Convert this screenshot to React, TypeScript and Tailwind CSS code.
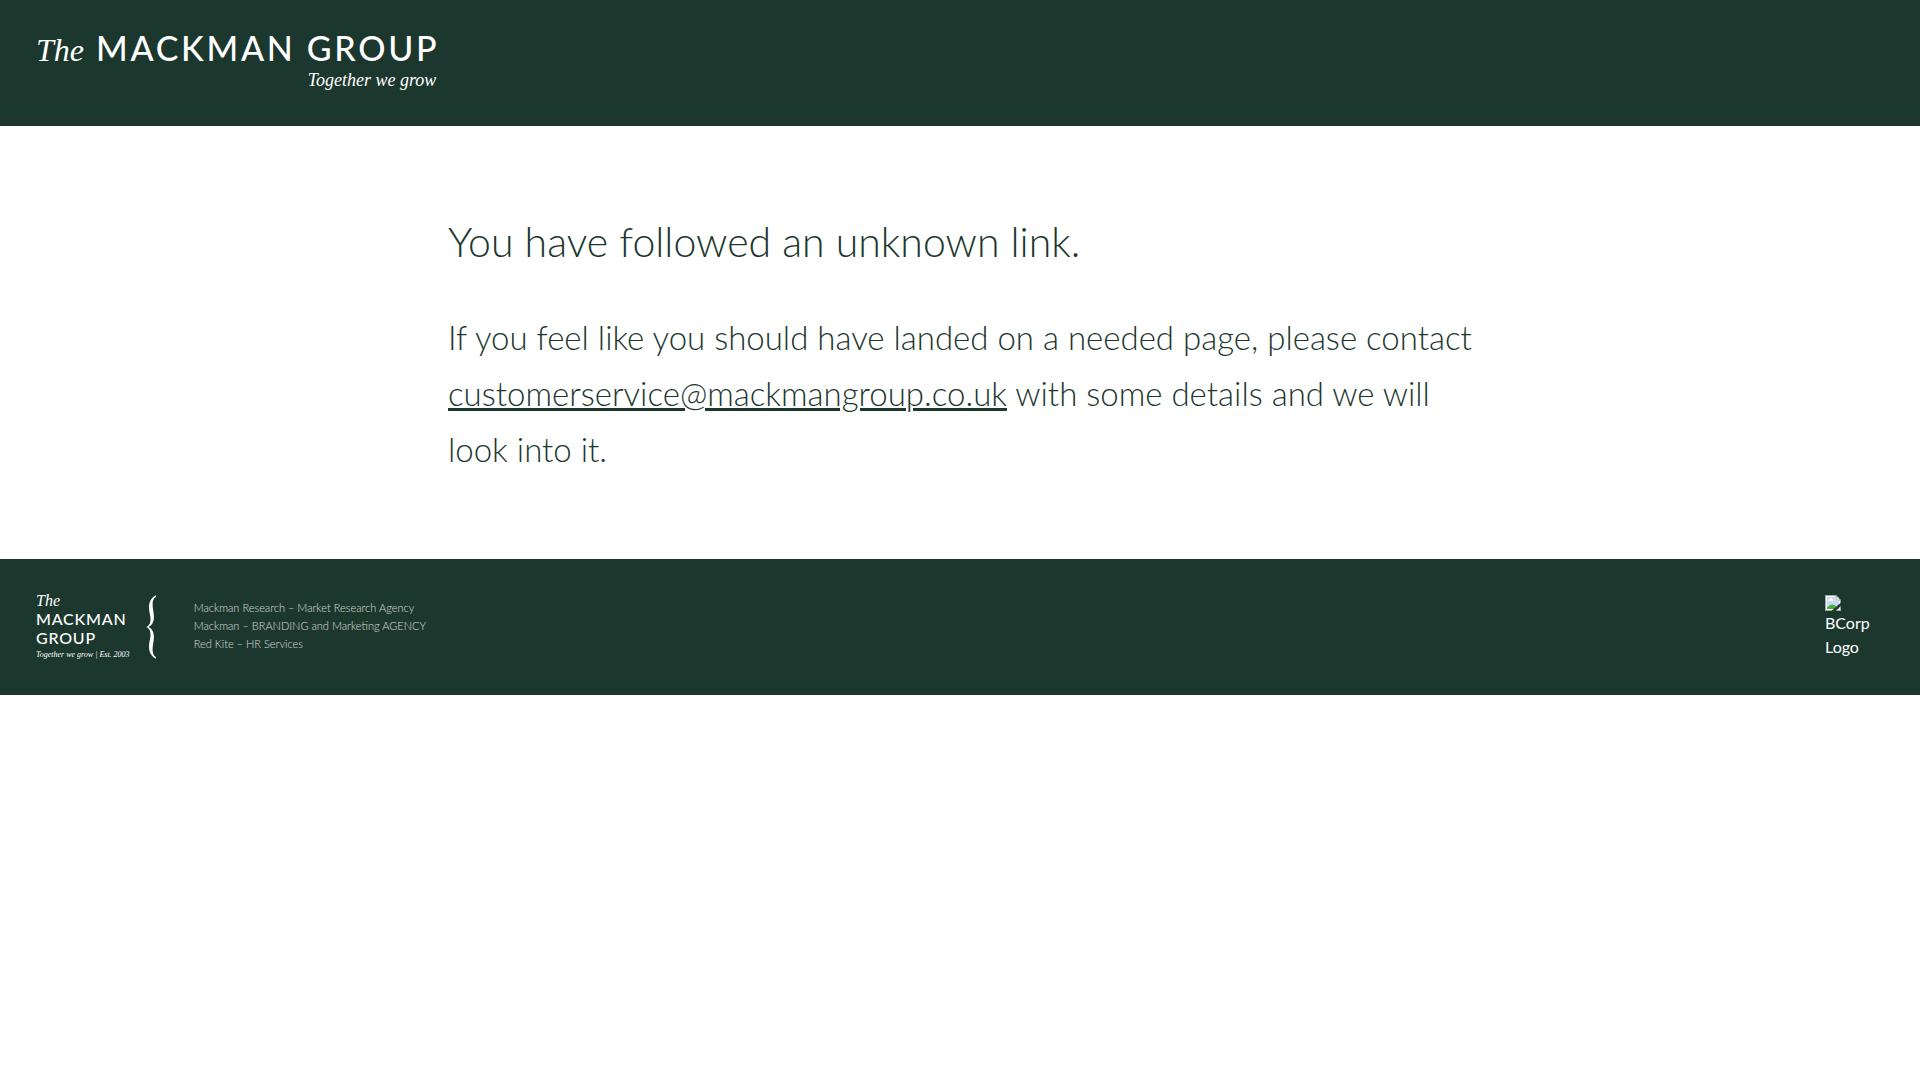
const services = [
  { name: "Mackman Research – Market Research Agency", href: "#research" },
  { name: "Mackman – BRANDING and Marketing AGENCY", href: "#branding" },
  { name: "Red Kite – HR Services", href: "#red-kite" },
];

function HeaderLogo() {
  return (
    <a href="#home" className="inline-flex flex-col items-end text-white">
      <span className="flex items-baseline gap-3 leading-7">
        <span className="font-['Liberation_Serif',serif] text-[32px] italic">The</span>
        <span className="text-[34px] font-medium tracking-[0.08em]">MACKMAN GROUP</span>
      </span>
      <span className="mt-1 pr-[3px] font-['Liberation_Serif',serif] text-lg leading-6 italic">
        Together we grow
      </span>
    </a>
  );
}

function FooterLogo() {
  return (
    <a href="#home" className="flex h-16 items-start gap-4 text-white">
      <span className="flex flex-col">
        <span className="font-['Liberation_Serif',serif] text-base leading-3 italic">The</span>
        <span className="mt-[2px] text-base leading-[19px] font-medium tracking-wider">
          MACKMAN
          <br />
          GROUP
        </span>
        <span className="mt-[2px] font-['Liberation_Serif',serif] text-[8px] leading-3 whitespace-nowrap italic">
          Together we grow | Est. 2003
        </span>
      </span>
      <svg width="12" height="64" viewBox="0 0 12 64" fill="currentColor" aria-hidden="true">
        <path d="M10 0.3C5 3 3 7 3 12.500C3 17 4.500 20 4.500 24C4.500 28 3.500 30.500 0.200 32C3.500 33.500 4.500 36 4.500 40C4.500 44 3 47 3 51.500C3 57 5 61 10 63.700V62.200C7.300 60.200 6.600 58 6.600 54.500C6.600 50 7.900 46.500 7.900 42C7.900 37 6 33.500 2.400 32C6 30.500 7.900 27 7.900 22C7.900 17.500 6.600 14 6.600 9.500C6.600 6 7.300 3.800 10 1.800Z" />
      </svg>
    </a>
  );
}

function BrokenImageIcon() {
  return (
    <svg width="16" height="16" viewBox="0 0 16 16" aria-hidden="true">
      <path d="M0 0H11L16 5V16H0Z" fill="#a5a5a5" />
      <path d="M1 1H10.500L15 5.500V15H1Z" fill="#fff" />
      <path d="M2 2H10V6H14V14H2Z" fill="#c3d9fb" />
      <path d="M3 6V5H4V4H5V3H7V4H8V6Z" fill="#fff" />
      <path d="M2 14V12.500Q5 9.500 7.500 9.500Q10 9.500 12 12L14 14Z" fill="#4cae32" />
      <path d="M10.500 0V5.500H16L11 0Z" fill="#a5a5a5" />
      <path d="M11.500 1.500V4.500H14.500Z" fill="#fff" />
      <path d="M16 7.500L6.500 16H10.500L16 11Z" fill="#1c372e" />
    </svg>
  );
}

export default function App() {
  return (
    <div className="bg-white font-['Lato',sans-serif] text-[#1c372e]">
      <header className="bg-[#1c372e] px-9 py-[34px]">
        <HeaderLogo />
      </header>

      <main className="mx-auto max-w-5xl pt-20 pb-[82px] font-light">
        <h1 className="text-[41px] leading-[71px]">You have followed an unknown link.</h1>
        <p className="mt-8 text-[33px] leading-[56px]">
          If you feel like you should have landed on a needed page, please contact{" "}
          <a
            href="mailto:customerservice@mackmangroup.co.uk"
            className="underline decoration-[3px]"
          >
            customerservice@mackmangroup.co.uk
          </a>{" "}
          with some details and we will look into it.
        </p>
      </main>

      <footer className="flex items-start justify-between bg-[#1c372e] px-9 py-9 text-white">
        <div className="flex gap-9">
          <FooterLogo />
          <ul className="pt-1 text-[11px] leading-[18px] font-light text-white/80">
            {services.map((service) => (
              <li key={service.name}>
                <a href={service.href}>{service.name}</a>
              </li>
            ))}
          </ul>
        </div>
        <a href="#bcorp" className="h-16 w-[59px] text-base leading-6">
          <BrokenImageIcon />
          BCorp Logo
        </a>
      </footer>
    </div>
  );
}
